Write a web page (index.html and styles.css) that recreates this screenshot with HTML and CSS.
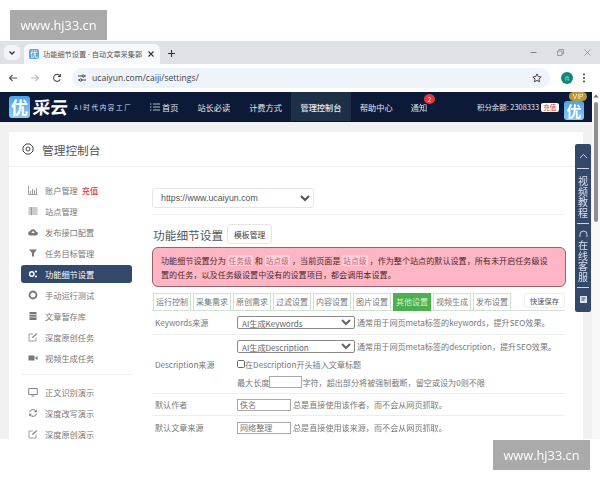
FILE: index.html
```html
<!DOCTYPE html>
<html lang="zh">
<head>
<meta charset="utf-8">
<title>功能细节设置</title>
<link rel="stylesheet" href="styles.css">
</head>
<body>
<div class="mark mark-top">www.hj33.cn</div>
<div class="mark mark-bottom">www.hj33.cn</div>
<div class="window">
  <div class="tabstrip">
    <div class="tabmenu"><svg width="8" height="8" viewBox="0 0 8 8"><path d="M1.500 2.500 4 5l2.500-2.500" fill="none" stroke="#333" stroke-width="1.300"/></svg></div>
    <div class="tab">
      <span class="favicon">优</span>
      <span class="tabtitle">功能细节设置 - 自动文章采集郭</span>
      <svg width="8" height="8" viewBox="0 0 8 8"><path d="M1.500 1.500l5 5M6.500 1.500l-5 5" stroke="#333" stroke-width="1.100"/></svg>
    </div>
    <svg class="newtab" width="9" height="9" viewBox="0 0 9 9"><path d="M4.500 1v7M1 4.500h7" stroke="#333" stroke-width="1.100"/></svg>
    <div class="winbtns">
      <svg width="9" height="9" viewBox="0 0 9 9"><path d="M1.500 4.500h6" stroke="#888"/></svg>
      <svg width="9" height="9" viewBox="0 0 9 9"><path d="M1.500 3h4.500v4.500H1.500zM3 3V1.500h4.500V6H6" fill="none" stroke="#888" stroke-width=".8"/></svg>
      <svg width="9" height="9" viewBox="0 0 9 9"><path d="M1.500 1.500l6 6M7.500 1.500l-6 6" stroke="#888" stroke-width=".8"/></svg>
    </div>
  </div>
  <div class="toolbar">
    <div class="navbtns">
      <svg width="10" height="10" viewBox="0 0 10 10"><path d="M9 5H1.500M4.500 2 1.500 5l3 3" fill="none" stroke="#555" stroke-width="1.100"/></svg>
      <svg width="10" height="10" viewBox="0 0 10 10"><path d="M1 5h7.500M5.500 2l3 3-3 3" fill="none" stroke="#b5b5b5" stroke-width="1.100"/></svg>
      <svg width="10" height="10" viewBox="0 0 10 10"><path d="M8.300 6.200A3.500 3.500 0 1 1 8 3M8.500 1v2.500H6" fill="none" stroke="#555" stroke-width="1.100"/></svg>
    </div>
    <div class="omnibox">
      <svg width="10" height="10" viewBox="0 0 10 10"><path d="M1 3h4M7.500 3H9M1 7h1.500M5 7h4" stroke="#444"/><circle cx="6.200" cy="3" r="1.200" fill="none" stroke="#444"/><circle cx="3.700" cy="7" r="1.200" fill="none" stroke="#444"/></svg>
      <span class="url">ucaiyun.com/caiji/settings/</span>
      <svg class="star" width="10" height="10" viewBox="0 0 10 10"><path d="M5 .9l1.250 2.700 2.900.35-2.150 2 .6 2.900L5 7.400 2.400 8.850l.6-2.900-2.150-2 2.900-.35z" fill="none" stroke="#333" stroke-width=".9"/></svg>
    </div>
    <span class="avatar">冉</span>
    <svg class="dots" width="4" height="10" viewBox="0 0 4 10"><circle cx="2" cy="1.500" r="1" fill="#444"/><circle cx="2" cy="5" r="1" fill="#444"/><circle cx="2" cy="8.500" r="1" fill="#444"/></svg>
  </div>
  <div class="viewport">
    <div class="page">
      <nav class="topnav">
        <div class="brand">
          <span class="logo">优</span>
          <span class="brandname">采云</span>
          <span class="slogan">AI时代内容工厂</span>
        </div>
        <a class="navitem first"><svg width="10" height="8" viewBox="0 0 10 8"><path d="M0 1h1.500M3 1h7M0 4h1.500M3 4h7M0 7h1.500M3 7h7" stroke="#dfe6ee" stroke-width=".8"/></svg>首页</a>
        <a class="navitem">站长必读</a>
        <a class="navitem">计费方式</a>
        <a class="navitem active">管理控制台</a>
        <a class="navitem">帮助中心</a>
        <a class="navitem notice">通知<span class="badge">2</span></a>
        <div class="points">积分余额: 2308333 <span class="recharge">充值</span></div>
        <div class="viplogo"><span class="logo small">优</span><span class="vip">VIP</span></div>
      </nav>
      <div class="card">
        <header class="cardhead">
          <svg width="12" height="12" viewBox="0 0 12 12"><path d="M4 1h4l3 3v4l-3 3H4L1 8V4z" fill="none" stroke="#444" stroke-width="1"/><circle cx="6" cy="6" r="2" fill="none" stroke="#444" stroke-width="1"/></svg>
          <h1>管理控制台</h1>
        </header>
        <div class="cardbody">
          <aside class="sidebar">
            <ul class="menu">
              <li><svg viewBox="0 0 10 10"><path d="M.5 1v8.500h9M2.500 9V6M4.500 9V4M6.500 9V5M8.500 9V3" fill="none" stroke="#888" stroke-width=".8"/></svg>账户管理<b>充值</b></li>
              <li><svg viewBox="0 0 10 10"><path d="M.5 2h9M.5 4h9M.5 6h9M.5 8h9M3.500 1v8" stroke="#999" stroke-width="1"/></svg>站点管理</li>
              <li><svg viewBox="0 0 10 10"><path d="M2.500 8.500a2.200 2.200 0 0 1-.3-4.400 3 3 0 0 1 5.700.3 2 2 0 0 1-.2 4.100z" fill="#777"/><path d="M5 3.800 3.300 6h3.400z" fill="#fff"/></svg>发布接口配置</li>
              <li><svg viewBox="0 0 10 10"><path d="M1 1.500h8L6 5v3.500H4V5z" fill="#777"/></svg>任务目标管理</li>
              <li class="current"><svg viewBox="0 0 10 10"><circle cx="3.800" cy="5" r="2.200" fill="none" stroke="#fff" stroke-width="1.400"/><circle cx="8" cy="2.500" r="1.100" fill="#fff"/><circle cx="8" cy="7.500" r="1.100" fill="#fff"/></svg>功能细节设置</li>
              <li><svg viewBox="0 0 10 10"><circle cx="5" cy="5" r="3.500" fill="none" stroke="#777" stroke-width="1.800"/></svg>手动运行测试</li>
              <li><svg viewBox="0 0 10 10"><path d="M1.500 1h7v8h-7z" fill="#777"/><path d="M1.500 3.500h7M1.500 6h7" stroke="#fff" stroke-width=".7"/></svg>文章暂存库</li>
              <li><svg viewBox="0 0 10 10"><path d="M8 5.500V9H1V2h4" fill="none" stroke="#888" stroke-width=".8"/><path d="M4 6l.3-1.300L8.500 1l.8.800-4 3.900z" fill="#888"/></svg>深度原创任务</li>
              <li><svg viewBox="0 0 10 10"><path d="M.5 2.500h6v5h-6zM7 5l2.500-2.200v4.400z" fill="#777"/></svg>视频生成任务</li>
            </ul>
            <ul class="menu demo">
              <li><svg viewBox="0 0 10 10"><path d="M.7 1.500h8.600v6H.7zM3.500 9h3" fill="none" stroke="#777" stroke-width=".9"/></svg>正文识别演示</li>
              <li><svg viewBox="0 0 10 10"><path d="M1.500 4.200A3.600 3.600 0 0 1 8 3.300M8.500 5.800A3.600 3.600 0 0 1 2 6.700" fill="none" stroke="#777" stroke-width="1"/><path d="M8.800 1.500v2.800H6zM1.200 8.500V5.700H4z" fill="#777"/></svg>深度改写演示</li>
              <li><svg viewBox="0 0 10 10"><path d="M8 5.500V9H1V2h4" fill="none" stroke="#888" stroke-width=".8"/><path d="M4 6l.3-1.300L8.500 1l.8.800-4 3.900z" fill="#888"/></svg>深度原创演示</li>
            </ul>
          </aside>
          <main class="content">
            <select class="siteselect"><option>https://www.ucaiyun.com</option></select>
            <div class="titlerow">
              <h2>功能细节设置</h2>
              <button class="tplbtn">模板管理</button>
            </div>
            <div class="alert">
              功能细节设置分为 <code>任务级</code> 和 <code>站点级</code> ，当前页面是 <code>站点级</code> ，作为整个站点的默认设置，所有未开启任务级设置的任务，以及任务级设置中没有的设置项目，都会调用本设置。
            </div>
            <div class="tabs">
              <span class="tabbtn">运行控制</span>
              <span class="tabbtn">采集需求</span>
              <span class="tabbtn">原创需求</span>
              <span class="tabbtn">过滤设置</span>
              <span class="tabbtn">内容设置</span>
              <span class="tabbtn">图片设置</span>
              <span class="tabbtn on">其他设置</span>
              <span class="tabbtn">视频生成</span>
              <span class="tabbtn">发布设置</span>
              <button class="savebtn">快速保存</button>
            </div>
            <div class="row">
              <label>Keywords来源</label>
              <div class="field">
                <div class="line"><select class="wide"><option>AI生成Keywords</option></select> 通常用于网页meta标签的keywords，提升SEO效果。</div>
              </div>
            </div>
            <div class="row tall">
              <label>Description来源</label>
              <div class="field">
                <div class="line"><select class="wide"><option>AI生成Description</option></select> 通常用于网页meta标签的description，提升SEO效果。</div>
                <div class="line tight"><input type="checkbox" class="check">在Description开头插入文章标题</div>
                <div class="line tight">最大长度<input class="num" type="text">字符，超出部分将被强制截断，留空或设为0则不限</div>
              </div>
            </div>
            <div class="row short">
              <label>默认作者</label>
              <div class="field">
                <div class="line"><input class="txt" type="text" value="佚名"> 总是直接使用该作者，而不会从网页抓取。</div>
              </div>
            </div>
            <div class="row">
              <label>默认文章来源</label>
              <div class="field">
                <div class="line"><input class="txt" type="text" value="网络整理"> 总是直接使用该来源，而不会从网页抓取。</div>
              </div>
            </div>
          </main>
        </div>
      </div>
    </div>
    <div class="scrollbar">
      <svg width="6" height="4" viewBox="0 0 6 4"><path d="M3 .5 5.500 3.500H.5z" fill="#666"/></svg>
      <span class="thumb"></span>
    </div>
    <div class="floatpanel">
      <svg width="9" height="6" viewBox="0 0 9 6"><path d="M1 5l3.500-3.500L8 5" fill="none" stroke="#dbe2ec" stroke-width=".9"/></svg>
      <span class="vtext first-v">视频教程</span>
      <svg class="headset" width="9" height="8" viewBox="0 0 9 8"><path d="M1 7V4.500a3.500 3.500 0 0 1 7 0V7" fill="none" stroke="#dbe2ec" stroke-width=".9"/></svg>
      <span class="vtext second-v">在线客服</span>
      <svg class="qrcode" width="9" height="9" viewBox="0 0 9 9"><path d="M1 1h7v7H1z" fill="#dbe2ec"/><path d="M2.500 3h4M2.500 5h3" stroke="#34496a"/></svg>
    </div>
  </div>
</div>
</body>
</html>
```
FILE: styles.css
```css
* { box-sizing: border-box; }
html, body { margin: 0; padding: 0; background: #fff; }
body {
  width: 600px; height: 480px; overflow: hidden; position: relative;
  font-family: "Noto Sans CJK SC", "Liberation Sans", sans-serif;
  font-size: 8.200px; color: #555;
}
.mark {
  position: absolute; z-index: 5; width: 97px; height: 30px;
  background: #aaa; color: #fff; font-family: "Open Sans", sans-serif;
  font-size: 12.800px; display: flex; align-items: center; justify-content: center;
  filter: blur(.3px);
}
.mark-top { left: 10px; top: 10px; }
.mark-bottom { left: 493px; top: 440px; }

.window { padding-top: 41px; filter: blur(.45px); }
.tabstrip { height: 23px; background: #dee1e6; display: flex; align-items: flex-end; padding-left: 4px; }
.tabmenu { width: 16px; height: 15px; margin-bottom: 4px; background: #f1f3f6; border-radius: 5px; display: flex; align-items: center; justify-content: center; }
.tab { width: 136px; height: 20px; margin-left: 4px; padding: 0 5px; background: #f7f9fc; border-radius: 6px 6px 0 0; display: flex; align-items: center; gap: 4px; }
.favicon { width: 10px; height: 10px; background: #5ba4dc; color: #fff; font-size: 8px; line-height: 10px; text-align: center; border-radius: 2px; flex: none; }
.tabtitle { flex: 1; font-size: 7.200px; color: #555; white-space: nowrap; overflow: hidden; }
.newtab { margin: 0 0 6px 7px; }
.winbtns { margin-left: auto; margin-right: 8px; margin-bottom: 7px; display: flex; gap: 18px; }
.toolbar { height: 28px; background: #fff; display: flex; align-items: center; padding-left: 8px; }
.navbtns { display: flex; gap: 12px; width: 64px; }
.omnibox { width: 478px; height: 20px; background: #eff3fa; border-radius: 10px; display: flex; align-items: center; padding: 0 8px 0 5px; gap: 5px; }
.url { flex: 1; font-family: "Open Sans", sans-serif; font-size: 8.600px; color: #444; }
.avatar { width: 12px; height: 12px; margin-left: 11px; border-radius: 50%; background: #0d8a75; color: #cde; font-size: 5px; line-height: 12px; text-align: center; }
.dots { margin-left: 9px; }

.viewport { position: relative; display: flex; height: 347px; overflow: hidden; }
.page { width: 592px; flex: none; background: #f1f1f1; }
.topnav { height: 30px; background: #0c1a38; display: flex; align-items: center; color: #e4e8ee; border-bottom: 1px solid #0a1530; }
.brand { width: 150px; flex: none; padding-left: 9px; display: flex; align-items: center; }
.logo { width: 21px; height: 22px; border-radius: 3px; background: linear-gradient(#4aa3e6, #8ccbf2); color: #fff; font-size: 17px; font-weight: 700; line-height: 21px; text-align: center; flex: none; }
.brandname { margin-left: 3px; font-family: "Liberation Serif", "Noto Sans CJK SC", serif; font-size: 17.500px; font-weight: 700; color: #fff; width: 41px; flex: none; transform: skewX(-6deg); }
.slogan { font-size: 6.500px; color: #d7dde6; white-space: nowrap; letter-spacing: 1.700px; }
.navitem { display: flex; align-items: center; gap: 2px; height: 100%; padding: 0 9px; white-space: nowrap; flex: none; }
.navitem.first { padding: 0; margin-right: 19px; }
.navitem.active { background: #1e3048; font-weight: 500; padding: 0; width: 60px; justify-content: center; }
.navitem:nth-of-type(2) { margin-right: 19px; padding: 0; }
.navitem:nth-of-type(3) { margin-right: 9px; padding: 0; }
.notice { position: relative; }
.badge { position: absolute; left: 22px; top: 2px; width: 11px; height: 10px; background: #e3363e; border-radius: 50%; color: #fff; font-size: 6.500px; line-height: 10px; text-align: center; }
.points { margin-left: 41px; font-size: 7.400px; white-space: nowrap; flex: none; width: 81px; }
.recharge { display: inline-block; background: #fff; color: #d43a4c; font-size: 6.500px; line-height: 9px; padding: 0 2.500px; border-radius: 2px; vertical-align: middle; }
.viplogo { position: relative; margin-left: 6px; width: 20px; height: 23px; flex: none; }
.small { width: 20px; height: 19px; position: absolute; top: 6px; left: 0; line-height: 19px; font-size: 15px; }
.vip { position: absolute; left: 5px; top: -3px; width: 18px; height: 9px; border-radius: 5px; background: #b59a3c; color: #fff2bd; font-size: 6.500px; line-height: 9px; text-align: center; font-family: "Liberation Sans", sans-serif; }

.card { margin: 10px 9px 0; width: 574px; background: #fff; }
.cardhead { height: 35px; padding-left: 13px; display: flex; align-items: center; gap: 8px; border-bottom: 1px solid #f1f1f1; }
h1 { margin: 0; font-size: 11.700px; font-weight: 400; color: #555; }
.cardbody { display: flex; }
.sidebar { width: 122px; margin-left: 12px; flex: none; padding-top: 12px; }
.menu { list-style: none; margin: 0; padding: 0 0 6px; width: 111px; }
.menu li { height: 21px; display: flex; align-items: center; gap: 7px; padding-left: 7px; color: #777; white-space: nowrap; }
.menu li svg { width: 10px; height: 10px; flex: none; }
.menu b { color: #e03a4e; font-weight: 500; margin-left: -3px; }
.menu li.current { height: 18px; margin: 2px 0 1px; background: #33496b; color: #fff; border-radius: 3px; }
.demo { border-top: 1px solid #eee; padding-top: 6px; }
.content { width: 414px; margin-left: 9px; padding-top: 21px; }
.siteselect { display: block; width: 162px; height: 20px; padding: 0 4px; font-family: "Liberation Sans", sans-serif; font-size: 8.800px; color: #555; background: #fff; border: 1px solid #e6e6e6; border-radius: 3px; }
.titlerow { margin-top: 6px; padding: 6px 0 0 1px; border-top: 1px solid #eee; display: flex; align-items: center; gap: 4px; height: 33px; width: 412px; }
h2 { margin: 0; font-size: 11.700px; font-weight: 400; color: #555; white-space: nowrap; flex: none; }
.tplbtn { width: 45px; height: 20px; padding: 0; background: #fff; border: 1px solid #e6e6e6; border-radius: 3px; font: inherit; font-size: 7.800px; color: #444; }
.alert { width: 414px; height: 40px; padding: 6px 13px 5px 8px; background: #ffb6c4; border: 1px solid #99606e; border-radius: 6px; font-size: 8.100px; line-height: 14px; color: #4a262e; }
.alert code { font-family: inherit; color: #c0606f; background: #ffd2da; padding: 0 1px; border-radius: 2px; letter-spacing: .3px; font-size: 7.500px; }
.tabs { display: flex; align-items: flex-start; gap: 2px; height: 24px; padding-top: 6px; width: 413px; border-bottom: 1px solid #cfe3d0; padding-left: 1px; }
.tabbtn { height: 18px; width: 38px; border: 1px solid #cfe3d0; color: #777; font-size: 8px; line-height: 16px; text-align: center; white-space: nowrap; overflow: hidden; }
.tabbtn.on { background: #4caf50; border-color: #4caf50; color: #d9f5c9; }
.savebtn { margin-left: auto; width: 41px; height: 15px; padding: 0; background: #fff; border: 1px solid #eee; font: inherit; font-size: 7.200px; color: #555; border-radius: 2px; }
.row { display: flex; align-items: center; width: 413px; height: 24px; border-bottom: 1px solid #eceeec; color: #777; font-size: 8.100px; }
.row.tall { height: 59px; }
.row.short { height: 22px; }
.row label { width: 85px; padding-left: 3px; flex: none; }
.field { flex: 1; }
.line { display: flex; align-items: center; gap: 2px; height: 13px; white-space: nowrap; }
.tall .line { height: 18px; }
.tall .line.tight { gap: 0; }
.wide { width: 118px; height: 13px; padding: 0; font: inherit; font-size: 8.100px; color: #666; background: #fff; border: 1px solid #888; border-radius: 2px; }
.check { appearance: none; width: 8px; height: 8px; margin: 0; border: 1px solid #666; border-radius: 1.500px; background: #fff; }
.num { width: 33px; height: 12px; padding: 0; border: 1px solid #aaa; }
.txt { width: 54px; height: 12px; padding: 0 2px; font: inherit; font-size: 8.100px; color: #777; border: 1px solid #aaa; }

.scrollbar { width: 8px; background: #f8f8f8; display: flex; flex-direction: column; align-items: center; padding-top: 2px; }
.thumb { width: 4px; height: 120px; margin-top: 4px; background: #8f8f8f; border-radius: 2px; }
.floatpanel { position: absolute; left: 575px; top: 52px; width: 16px; height: 168px; background: #34496a; border-radius: 2px; display: flex; flex-direction: column; align-items: center; padding-top: 9px; color: #dbe2ec; }
.vtext { width: 12px; font-size: 10px; line-height: 10.500px; text-align: center; }
.first-v { margin-top: 9px; padding: 7px 0 5px; border-top: 1px solid #cdd6e2; border-bottom: 1px solid #cdd6e2; }
.second-v { margin-top: 2px; padding-bottom: 5px; border-bottom: 1px solid #cdd6e2; }
.headset { margin-top: 6px; flex: none; }
.qrcode { margin-top: 7px; flex: none; }
```
